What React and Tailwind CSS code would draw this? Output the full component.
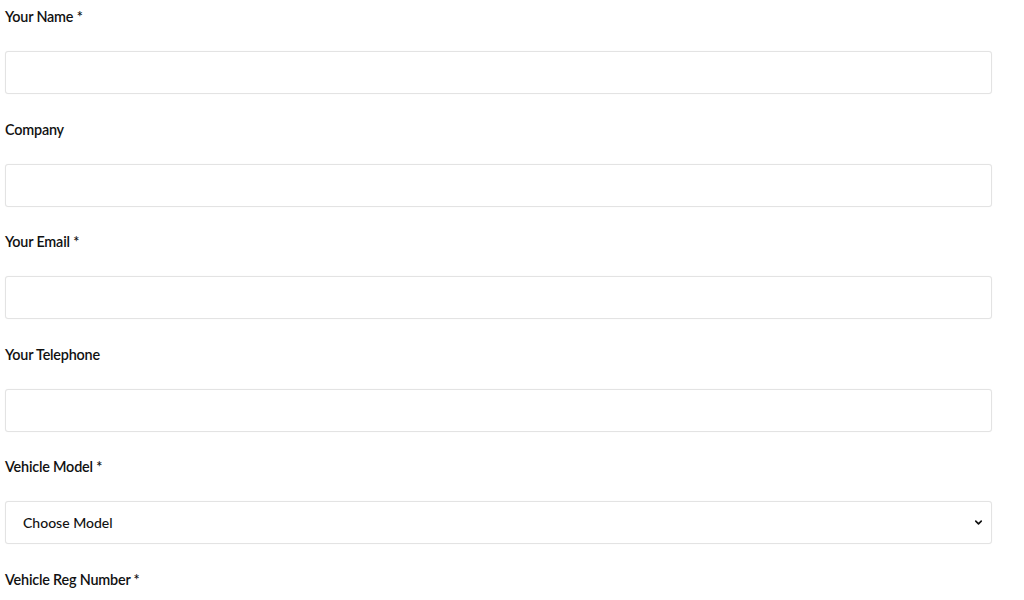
import { ChevronDown } from 'lucide-react';

const fields = [
  { label: 'Your Name', required: true },
  { label: 'Company' },
  { label: 'Your Email', required: true },
  { label: 'Your Telephone' },
  { label: 'Vehicle Model', required: true, select: true },
  { label: 'Vehicle Reg Number', required: true },
];

export default function App() {
  return (
    <div
      className="min-h-screen bg-white pl-[5px] pr-[32px] pt-[7px] text-[#111]"
      style={{ fontFamily: 'Lato, "Noto Sans", sans-serif' }}
    >
      <form className="flex flex-col gap-[25.6px]">
        {fields.map((f) => (
          <div key={f.label} className="flex flex-col gap-[24px]">
            <label className="text-[14.4px] leading-[20px] font-semibold tracking-[-0.2px]">
              {f.label}
              {f.required && ' *'}
            </label>
            {f.select ? (
              <div className="relative">
                <select className="w-full h-[43px] appearance-none rounded-[3px] border border-[#e3e3e3] bg-white pl-[17px] text-[14px] font-medium text-[#111] shadow-[0_0_1px_rgba(0,0,0,0.08)] outline-none">
                  <option>Choose Model</option>
                </select>
                <ChevronDown
                  className="pointer-events-none absolute right-[8px] top-[16px] w-[11px] h-[11px]"
                  strokeWidth={3.5}
                />
              </div>
            ) : (
              <input
                type="text"
                className="w-full h-[43px] rounded-[3px] border border-[#e3e3e3] bg-white shadow-[0_0_1px_rgba(0,0,0,0.08)] outline-none"
              />
            )}
          </div>
        ))}
      </form>
    </div>
  );
}
